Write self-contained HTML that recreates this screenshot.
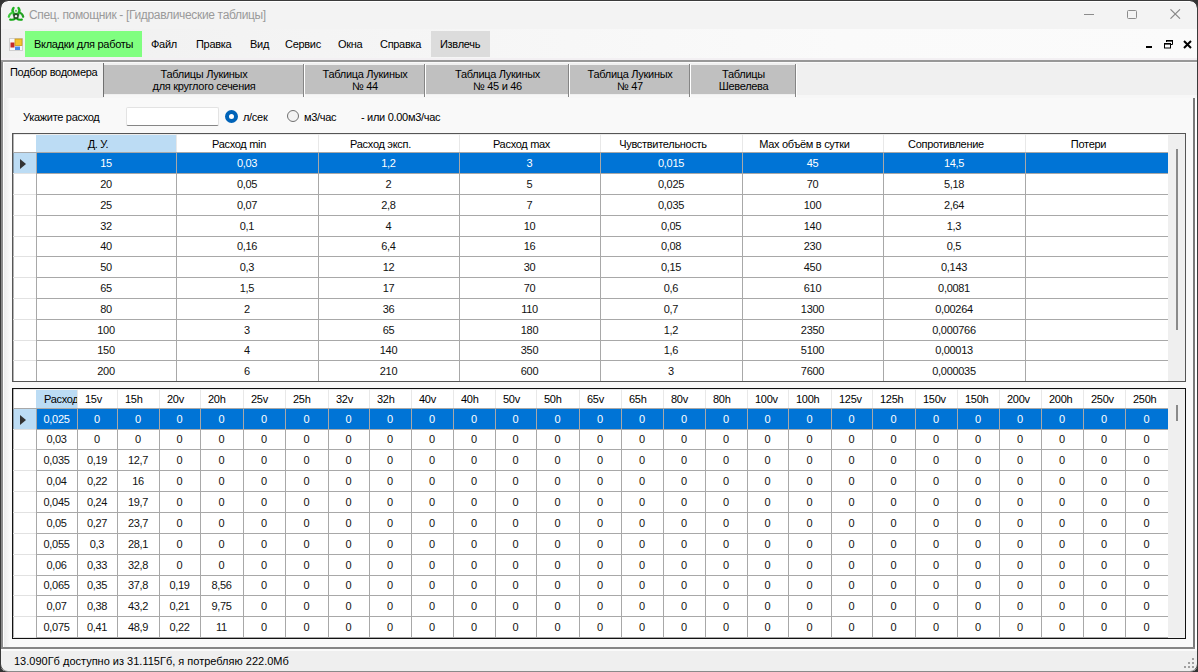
<!DOCTYPE html>
<html><head><meta charset="utf-8"><style>
*{margin:0;padding:0;box-sizing:border-box}
html,body{width:1198px;height:672px;overflow:hidden;background:#333;font-family:"Liberation Sans", sans-serif;}
.ab{position:absolute}
.t11{position:absolute;font-size:11px;letter-spacing:-0.3px;white-space:nowrap;color:#000;line-height:13px}
.ht{position:absolute;font-size:11px;letter-spacing:-0.3px;text-align:center;white-space:nowrap;overflow:hidden;color:#000}
.ct{position:absolute;font-size:11px;letter-spacing:-0.3px;text-align:center;white-space:nowrap;overflow:hidden;color:#111}
.ct.s{color:#fff}
.tri{position:absolute;width:0;height:0;border-top:5px solid transparent;border-bottom:5px solid transparent;border-left:6px solid #333}
</style></head><body>
<div class="ab" style="left:0;top:0;width:1198px;height:672px;border-radius:8px;overflow:hidden">
<div class="ab" style="left:0;top:0;width:1198px;height:672px;background:#f3f3f3;border:1px solid #454545;border-radius:8px;overflow:hidden">
</div>
<div class="ab" style="left:8px;top:1px;width:1182px;height:1px;background:#fff"></div>
<svg class="ab" style="left:7px;top:6px" width="18" height="16" viewBox="0 0 18 16">
<g fill="none" stroke-linecap="round">
<path d="M6.5 2 Q4.5 4.5 6.5 6.8" stroke="#22b422" stroke-width="2.4"/>
<path d="M11.5 2 Q13.5 4.5 11.5 6.8" stroke="#22b422" stroke-width="2.4"/>
<path d="M1.8 10.8 Q2.6 7.6 5.2 6.8" stroke="#3cc83c" stroke-width="2.2"/>
<path d="M16.2 10.8 Q15.4 7.6 12.8 6.8" stroke="#22a022" stroke-width="2.2"/>
<path d="M3.2 13.6 Q6.5 14.2 8.2 12.4" stroke="#12a812" stroke-width="2.2"/>
<path d="M14.8 13.6 Q11.5 14.2 9.8 12.4" stroke="#12a812" stroke-width="2.2"/>
<path d="M6.5 8.8 Q9 6.6 11.5 8.8" stroke="#1c8c1c" stroke-width="1.8"/>
</g>
<circle cx="9" cy="10.2" r="2" fill="none" stroke="#2c4a2c" stroke-width="1.5"/>
<circle cx="9" cy="4.8" r="1.1" fill="#7aa87a"/>
</svg>
<div class="ab" style="left:29px;top:8px;font-size:12px;letter-spacing:-0.33px;color:#9a9a9a;white-space:nowrap">Спец. помощник - [Гидравлические таблицы]</div>
<!-- window controls -->
<div class="ab" style="left:1084px;top:14px;width:10px;height:1px;background:#8c8c8c"></div>
<div class="ab" style="left:1127px;top:10px;width:10px;height:9px;border:1px solid #8c8c8c;border-radius:1.5px"></div>
<svg class="ab" style="left:1170px;top:9px" width="11" height="10" viewBox="0 0 11 10"><path d="M0.5 0.3 L10 9.7 M10 0.3 L0.5 9.7" stroke="#888" stroke-width="1.1"/></svg>
<!-- menubar -->
<div class="ab" style="left:1px;top:29px;width:1196px;height:31px;background:linear-gradient(90deg,#f0f0f0 0%,#f6f6f6 40%,#fafafa 70%,#fbfbfb 100%)"></div>
<svg class="ab" style="left:9px;top:38px" width="14" height="13" viewBox="0 0 14 13">
<rect x="0.5" y="0.5" width="13" height="12" fill="#f8f8f8" stroke="#cfcfcf"/>
<rect x="1.5" y="4.5" width="4" height="5" fill="#c42a2a"/>
<rect x="6" y="1" width="7" height="6.5" fill="#f4c430" stroke="#c8981a" stroke-width="0.8"/>
<rect x="6" y="8.5" width="5" height="3.5" fill="#4a8ae8"/>
</svg>
<div class="ab" style="left:25px;top:31px;width:117px;height:26px;background:#80ff80"></div>
<div class="ab" style="left:431px;top:31px;width:59px;height:26px;background:#dcdcdc"></div>
<div class="t11" style="left:34px;top:38px">Вкладки для работы</div>
<div class="t11" style="left:151px;top:38px">Файл</div>
<div class="t11" style="left:196px;top:38px">Правка</div>
<div class="t11" style="left:250px;top:38px">Вид</div>
<div class="t11" style="left:285px;top:38px">Сервис</div>
<div class="t11" style="left:338px;top:38px">Окна</div>
<div class="t11" style="left:380px;top:38px">Справка</div>
<div class="t11" style="left:440px;top:38px">Извлечь</div>
<div class="ab" style="left:1146px;top:46px;width:6px;height:2px;background:#000"></div>
<svg class="ab" style="left:1163px;top:39px" width="11" height="10" viewBox="0 0 11 10">
<path d="M3.5 3 V1.5 H9.5 V5.5 H8" fill="none" stroke="#000" stroke-width="1"/><rect x="3" y="1" width="7" height="1.6" fill="#000"/>
<rect x="1.5" y="4.5" width="6" height="4.5" fill="#fff" stroke="#000" stroke-width="1"/><rect x="1" y="4" width="7" height="1.6" fill="#000"/>
</svg>
<svg class="ab" style="left:1183px;top:40px" width="9" height="9" viewBox="0 0 9 9"><path d="M1 1 L8 8 M8 1 L1 8" stroke="#000" stroke-width="2"/></svg>
<!-- separator -->
<div class="ab" style="left:1px;top:58px;width:1196px;height:2px;background:#f3f0f3"></div>
<div class="ab" style="left:1px;top:60px;width:1196px;height:2px;background:#989898"></div>
<div class="ab" style="left:1px;top:62px;width:1196px;height:36px;background:#f0f0f0"></div>
<div class="ab" style="left:1px;top:62px;width:1196px;height:1px;background:#fafafa"></div>
<div class="ab" style="left:1px;top:95px;width:1196px;height:3px;background:#f7f7f7"></div>
<!-- tabs -->
<div class="ab" style="left:3px;top:62px;width:101px;height:36px;background:#f0f0f0;border-top:1px solid #fafafa;border-left:1px solid #fff"></div>
<div class="ab" style="left:103px;top:63px;width:1px;height:34px;background:#707070"></div>
<div class="t11" style="left:10px;top:66px">Подбор водомера</div>
<div class="ab" style="left:104px;top:65px;width:200px;height:29px;background:#c0c0c0"></div>
<div class="ab" style="left:303px;top:64px;width:1px;height:33px;background:#858585"></div>
<div class="ab" style="left:304px;top:64px;width:1px;height:33px;background:#fff"></div>
<div class="t11" style="left:104px;top:68px;width:200px;text-align:center;line-height:12px">Таблицы Лукиных<br>для круглого сечения</div>
<div class="ab" style="left:305px;top:65px;width:120px;height:29px;background:#c0c0c0"></div>
<div class="ab" style="left:424px;top:64px;width:1px;height:33px;background:#858585"></div>
<div class="ab" style="left:425px;top:64px;width:1px;height:33px;background:#fff"></div>
<div class="t11" style="left:305px;top:68px;width:120px;text-align:center;line-height:12px">Таблица Лукиных<br>№ 44</div>
<div class="ab" style="left:426px;top:65px;width:143px;height:29px;background:#c0c0c0"></div>
<div class="ab" style="left:568px;top:64px;width:1px;height:33px;background:#858585"></div>
<div class="ab" style="left:569px;top:64px;width:1px;height:33px;background:#fff"></div>
<div class="t11" style="left:426px;top:68px;width:143px;text-align:center;line-height:12px">Таблица Лукиных<br>№ 45 и 46</div>
<div class="ab" style="left:570px;top:65px;width:120px;height:29px;background:#c0c0c0"></div>
<div class="ab" style="left:689px;top:64px;width:1px;height:33px;background:#858585"></div>
<div class="ab" style="left:690px;top:64px;width:1px;height:33px;background:#fff"></div>
<div class="t11" style="left:570px;top:68px;width:120px;text-align:center;line-height:12px">Таблица Лукиных<br>№ 47</div>
<div class="ab" style="left:691px;top:65px;width:105px;height:29px;background:#c0c0c0"></div>
<div class="ab" style="left:795px;top:64px;width:1px;height:33px;background:#858585"></div>
<div class="ab" style="left:796px;top:64px;width:1px;height:33px;background:#fff"></div>
<div class="t11" style="left:691px;top:68px;width:105px;text-align:center;line-height:12px">Таблицы<br>Шевелева</div>

<!-- page -->
<div class="ab" style="left:1px;top:98px;width:1196px;height:549px;background:#f9f9f9"></div>
<div class="ab" style="left:1px;top:62px;width:2px;height:585px;background:#8c8c8c"></div>
<div class="ab" style="left:3px;top:98px;width:1px;height:549px;background:#fff"></div>
<div class="ab" style="left:4px;top:98px;width:6px;height:549px;background:linear-gradient(90deg,#ececec,#f9f9f9)"></div>
<div class="ab" style="left:1193px;top:98px;width:2px;height:549px;background:#7a7a7a"></div>
<div class="ab" style="left:1195px;top:98px;width:2px;height:551px;background:#fff"></div>
<div class="ab" style="left:1px;top:647px;width:1194px;height:2px;background:#858585"></div>
<div class="ab" style="left:1px;top:649px;width:1196px;height:2px;background:#fafafa"></div>
<div class="t11" style="left:23px;top:111px">Укажите расход</div>
<div class="ab" style="left:126px;top:107px;width:93px;height:19px;background:#fff;border:1px solid #e3e3e3;border-bottom:1px solid #868686;border-radius:2px"></div>
<div class="ab" style="left:225px;top:110px;width:13px;height:13px;border-radius:50%;border:4px solid #0063b8;background:#fff"></div>
<div class="t11" style="left:243px;top:111px">л/сек</div>
<div class="ab" style="left:287px;top:110px;width:12px;height:12px;border-radius:50%;border:1px solid #707070;background:#f3f3f3"></div>
<div class="t11" style="left:304px;top:111px">м3/час</div>
<div class="t11" style="left:361px;top:111px">- или 0.00м3/час</div>
<div class="ab" style="left:12px;top:133px;width:1174px;height:249px;border:1px solid #555;background:#fff"></div>
<div class="ab" style="left:36px;top:134px;width:140px;height:18px;background:#bcdcf4"></div>
<div class="ab" style="left:13px;top:134px;width:1155px;height:1px;background:#ececec"></div>
<div class="ab" style="left:13px;top:153px;width:23px;height:20px;background:#bcdcf4"></div>
<div class="ab" style="left:37px;top:153px;width:1131px;height:20px;background:#0074d6"></div>
<div class="tri" style="left:20px;top:159px"></div>
<div class="ab" style="left:13px;top:134px;width:1px;height:247px;background:rgba(0,0,0,0.3)"></div>
<div class="ab" style="left:13px;top:152px;width:23px;height:1px;background:#a8a8a8"></div>
<div class="ab" style="left:36px;top:152px;width:1132px;height:1px;background:#a8a8a8"></div>
<div class="ab" style="left:13px;top:173px;width:23px;height:1px;background:#e2e2e2"></div>
<div class="ab" style="left:36px;top:173px;width:1132px;height:1px;background:#a8a8a8"></div>
<div class="ab" style="left:13px;top:194px;width:23px;height:1px;background:#e2e2e2"></div>
<div class="ab" style="left:36px;top:194px;width:1132px;height:1px;background:#a8a8a8"></div>
<div class="ab" style="left:13px;top:215px;width:23px;height:1px;background:#e2e2e2"></div>
<div class="ab" style="left:36px;top:215px;width:1132px;height:1px;background:#a8a8a8"></div>
<div class="ab" style="left:13px;top:236px;width:23px;height:1px;background:#e2e2e2"></div>
<div class="ab" style="left:36px;top:236px;width:1132px;height:1px;background:#a8a8a8"></div>
<div class="ab" style="left:13px;top:256px;width:23px;height:1px;background:#e2e2e2"></div>
<div class="ab" style="left:36px;top:256px;width:1132px;height:1px;background:#a8a8a8"></div>
<div class="ab" style="left:13px;top:277px;width:23px;height:1px;background:#e2e2e2"></div>
<div class="ab" style="left:36px;top:277px;width:1132px;height:1px;background:#a8a8a8"></div>
<div class="ab" style="left:13px;top:298px;width:23px;height:1px;background:#e2e2e2"></div>
<div class="ab" style="left:36px;top:298px;width:1132px;height:1px;background:#a8a8a8"></div>
<div class="ab" style="left:13px;top:319px;width:23px;height:1px;background:#e2e2e2"></div>
<div class="ab" style="left:36px;top:319px;width:1132px;height:1px;background:#a8a8a8"></div>
<div class="ab" style="left:13px;top:340px;width:23px;height:1px;background:#e2e2e2"></div>
<div class="ab" style="left:36px;top:340px;width:1132px;height:1px;background:#a8a8a8"></div>
<div class="ab" style="left:13px;top:360px;width:23px;height:1px;background:#e2e2e2"></div>
<div class="ab" style="left:36px;top:360px;width:1132px;height:1px;background:#a8a8a8"></div>
<div class="ab" style="left:36px;top:152px;width:1px;height:229px;background:#a8a8a8"></div>
<div class="ab" style="left:176px;top:134px;width:1px;height:18px;background:#e8e8e8"></div>
<div class="ab" style="left:176px;top:152px;width:1px;height:229px;background:#a8a8a8"></div>
<div class="ab" style="left:318px;top:134px;width:1px;height:18px;background:#e8e8e8"></div>
<div class="ab" style="left:318px;top:152px;width:1px;height:229px;background:#a8a8a8"></div>
<div class="ab" style="left:459px;top:134px;width:1px;height:18px;background:#e8e8e8"></div>
<div class="ab" style="left:459px;top:152px;width:1px;height:229px;background:#a8a8a8"></div>
<div class="ab" style="left:600px;top:134px;width:1px;height:18px;background:#e8e8e8"></div>
<div class="ab" style="left:600px;top:152px;width:1px;height:229px;background:#a8a8a8"></div>
<div class="ab" style="left:742px;top:134px;width:1px;height:18px;background:#e8e8e8"></div>
<div class="ab" style="left:742px;top:152px;width:1px;height:229px;background:#a8a8a8"></div>
<div class="ab" style="left:883px;top:134px;width:1px;height:18px;background:#e8e8e8"></div>
<div class="ab" style="left:883px;top:152px;width:1px;height:229px;background:#a8a8a8"></div>
<div class="ab" style="left:1025px;top:134px;width:1px;height:18px;background:#e8e8e8"></div>
<div class="ab" style="left:1025px;top:152px;width:1px;height:229px;background:#a8a8a8"></div>
<div class="ht" style="left:36px;width:140px;padding-right:16px;text-align:center;top:135px;height:17px;line-height:18px">Д. У.</div>
<div class="ht" style="left:176px;width:142px;padding-right:16px;text-align:center;top:135px;height:17px;line-height:18px">Расход min</div>
<div class="ht" style="left:318px;width:141px;padding-right:16px;text-align:center;top:135px;height:17px;line-height:18px">Расход эксп.</div>
<div class="ht" style="left:459px;width:141px;padding-right:16px;text-align:center;top:135px;height:17px;line-height:18px">Расход max</div>
<div class="ht" style="left:600px;width:142px;padding-right:16px;text-align:center;top:135px;height:17px;line-height:18px">Чувствительность</div>
<div class="ht" style="left:742px;width:141px;padding-right:16px;text-align:center;top:135px;height:17px;line-height:18px">Max объём в сутки</div>
<div class="ht" style="left:883px;width:142px;padding-right:16px;text-align:center;top:135px;height:17px;line-height:18px">Сопротивление</div>
<div class="ht" style="left:1025px;width:143px;padding-right:16px;text-align:center;top:135px;height:17px;line-height:18px">Потери</div>
<div class="ct s" style="left:36px;top:152px;width:140px;height:21px;line-height:22px">15</div>
<div class="ct s" style="left:176px;top:152px;width:142px;height:21px;line-height:22px">0,03</div>
<div class="ct s" style="left:318px;top:152px;width:141px;height:21px;line-height:22px">1,2</div>
<div class="ct s" style="left:459px;top:152px;width:141px;height:21px;line-height:22px">3</div>
<div class="ct s" style="left:600px;top:152px;width:142px;height:21px;line-height:22px">0,015</div>
<div class="ct s" style="left:742px;top:152px;width:141px;height:21px;line-height:22px">45</div>
<div class="ct s" style="left:883px;top:152px;width:142px;height:21px;line-height:22px">14,5</div>
<div class="ct" style="left:36px;top:173px;width:140px;height:21px;line-height:22px">20</div>
<div class="ct" style="left:176px;top:173px;width:142px;height:21px;line-height:22px">0,05</div>
<div class="ct" style="left:318px;top:173px;width:141px;height:21px;line-height:22px">2</div>
<div class="ct" style="left:459px;top:173px;width:141px;height:21px;line-height:22px">5</div>
<div class="ct" style="left:600px;top:173px;width:142px;height:21px;line-height:22px">0,025</div>
<div class="ct" style="left:742px;top:173px;width:141px;height:21px;line-height:22px">70</div>
<div class="ct" style="left:883px;top:173px;width:142px;height:21px;line-height:22px">5,18</div>
<div class="ct" style="left:36px;top:194px;width:140px;height:21px;line-height:22px">25</div>
<div class="ct" style="left:176px;top:194px;width:142px;height:21px;line-height:22px">0,07</div>
<div class="ct" style="left:318px;top:194px;width:141px;height:21px;line-height:22px">2,8</div>
<div class="ct" style="left:459px;top:194px;width:141px;height:21px;line-height:22px">7</div>
<div class="ct" style="left:600px;top:194px;width:142px;height:21px;line-height:22px">0,035</div>
<div class="ct" style="left:742px;top:194px;width:141px;height:21px;line-height:22px">100</div>
<div class="ct" style="left:883px;top:194px;width:142px;height:21px;line-height:22px">2,64</div>
<div class="ct" style="left:36px;top:215px;width:140px;height:21px;line-height:22px">32</div>
<div class="ct" style="left:176px;top:215px;width:142px;height:21px;line-height:22px">0,1</div>
<div class="ct" style="left:318px;top:215px;width:141px;height:21px;line-height:22px">4</div>
<div class="ct" style="left:459px;top:215px;width:141px;height:21px;line-height:22px">10</div>
<div class="ct" style="left:600px;top:215px;width:142px;height:21px;line-height:22px">0,05</div>
<div class="ct" style="left:742px;top:215px;width:141px;height:21px;line-height:22px">140</div>
<div class="ct" style="left:883px;top:215px;width:142px;height:21px;line-height:22px">1,3</div>
<div class="ct" style="left:36px;top:236px;width:140px;height:20px;line-height:21px">40</div>
<div class="ct" style="left:176px;top:236px;width:142px;height:20px;line-height:21px">0,16</div>
<div class="ct" style="left:318px;top:236px;width:141px;height:20px;line-height:21px">6,4</div>
<div class="ct" style="left:459px;top:236px;width:141px;height:20px;line-height:21px">16</div>
<div class="ct" style="left:600px;top:236px;width:142px;height:20px;line-height:21px">0,08</div>
<div class="ct" style="left:742px;top:236px;width:141px;height:20px;line-height:21px">230</div>
<div class="ct" style="left:883px;top:236px;width:142px;height:20px;line-height:21px">0,5</div>
<div class="ct" style="left:36px;top:256px;width:140px;height:21px;line-height:22px">50</div>
<div class="ct" style="left:176px;top:256px;width:142px;height:21px;line-height:22px">0,3</div>
<div class="ct" style="left:318px;top:256px;width:141px;height:21px;line-height:22px">12</div>
<div class="ct" style="left:459px;top:256px;width:141px;height:21px;line-height:22px">30</div>
<div class="ct" style="left:600px;top:256px;width:142px;height:21px;line-height:22px">0,15</div>
<div class="ct" style="left:742px;top:256px;width:141px;height:21px;line-height:22px">450</div>
<div class="ct" style="left:883px;top:256px;width:142px;height:21px;line-height:22px">0,143</div>
<div class="ct" style="left:36px;top:277px;width:140px;height:21px;line-height:22px">65</div>
<div class="ct" style="left:176px;top:277px;width:142px;height:21px;line-height:22px">1,5</div>
<div class="ct" style="left:318px;top:277px;width:141px;height:21px;line-height:22px">17</div>
<div class="ct" style="left:459px;top:277px;width:141px;height:21px;line-height:22px">70</div>
<div class="ct" style="left:600px;top:277px;width:142px;height:21px;line-height:22px">0,6</div>
<div class="ct" style="left:742px;top:277px;width:141px;height:21px;line-height:22px">610</div>
<div class="ct" style="left:883px;top:277px;width:142px;height:21px;line-height:22px">0,0081</div>
<div class="ct" style="left:36px;top:298px;width:140px;height:21px;line-height:22px">80</div>
<div class="ct" style="left:176px;top:298px;width:142px;height:21px;line-height:22px">2</div>
<div class="ct" style="left:318px;top:298px;width:141px;height:21px;line-height:22px">36</div>
<div class="ct" style="left:459px;top:298px;width:141px;height:21px;line-height:22px">110</div>
<div class="ct" style="left:600px;top:298px;width:142px;height:21px;line-height:22px">0,7</div>
<div class="ct" style="left:742px;top:298px;width:141px;height:21px;line-height:22px">1300</div>
<div class="ct" style="left:883px;top:298px;width:142px;height:21px;line-height:22px">0,00264</div>
<div class="ct" style="left:36px;top:319px;width:140px;height:21px;line-height:22px">100</div>
<div class="ct" style="left:176px;top:319px;width:142px;height:21px;line-height:22px">3</div>
<div class="ct" style="left:318px;top:319px;width:141px;height:21px;line-height:22px">65</div>
<div class="ct" style="left:459px;top:319px;width:141px;height:21px;line-height:22px">180</div>
<div class="ct" style="left:600px;top:319px;width:142px;height:21px;line-height:22px">1,2</div>
<div class="ct" style="left:742px;top:319px;width:141px;height:21px;line-height:22px">2350</div>
<div class="ct" style="left:883px;top:319px;width:142px;height:21px;line-height:22px">0,000766</div>
<div class="ct" style="left:36px;top:340px;width:140px;height:20px;line-height:21px">150</div>
<div class="ct" style="left:176px;top:340px;width:142px;height:20px;line-height:21px">4</div>
<div class="ct" style="left:318px;top:340px;width:141px;height:20px;line-height:21px">140</div>
<div class="ct" style="left:459px;top:340px;width:141px;height:20px;line-height:21px">350</div>
<div class="ct" style="left:600px;top:340px;width:142px;height:20px;line-height:21px">1,6</div>
<div class="ct" style="left:742px;top:340px;width:141px;height:20px;line-height:21px">5100</div>
<div class="ct" style="left:883px;top:340px;width:142px;height:20px;line-height:21px">0,00013</div>
<div class="ct" style="left:36px;top:360px;width:140px;height:21px;line-height:22px">200</div>
<div class="ct" style="left:176px;top:360px;width:142px;height:21px;line-height:22px">6</div>
<div class="ct" style="left:318px;top:360px;width:141px;height:21px;line-height:22px">210</div>
<div class="ct" style="left:459px;top:360px;width:141px;height:21px;line-height:22px">600</div>
<div class="ct" style="left:600px;top:360px;width:142px;height:21px;line-height:22px">3</div>
<div class="ct" style="left:742px;top:360px;width:141px;height:21px;line-height:22px">7600</div>
<div class="ct" style="left:883px;top:360px;width:142px;height:21px;line-height:22px">0,000035</div>
<div class="ab" style="left:1168px;top:134px;width:17px;height:247px;background:#efefef"></div>
<div class="ab" style="left:1176px;top:149px;width:2px;height:181px;background:#8a8a8a"></div>
<div class="ab" style="left:12px;top:388px;width:1174px;height:251px;border:1px solid #111;background:#fff"></div>
<div class="ab" style="left:36px;top:389px;width:41px;height:19px;background:#bcdcf4"></div>
<div class="ab" style="left:13px;top:389px;width:1155px;height:1px;background:#ececec"></div>
<div class="ab" style="left:13px;top:409px;width:23px;height:20px;background:#bcdcf4"></div>
<div class="ab" style="left:37px;top:409px;width:1131px;height:20px;background:#0074d6"></div>
<div class="tri" style="left:20px;top:415px"></div>
<div class="ab" style="left:13px;top:389px;width:1px;height:249px;background:rgba(0,0,0,0.3)"></div>
<div class="ab" style="left:13px;top:408px;width:23px;height:1px;background:#a8a8a8"></div>
<div class="ab" style="left:36px;top:408px;width:1132px;height:1px;background:#a8a8a8"></div>
<div class="ab" style="left:13px;top:429px;width:23px;height:1px;background:#e2e2e2"></div>
<div class="ab" style="left:36px;top:429px;width:1132px;height:1px;background:#a8a8a8"></div>
<div class="ab" style="left:13px;top:449px;width:23px;height:1px;background:#e2e2e2"></div>
<div class="ab" style="left:36px;top:449px;width:1132px;height:1px;background:#a8a8a8"></div>
<div class="ab" style="left:13px;top:470px;width:23px;height:1px;background:#e2e2e2"></div>
<div class="ab" style="left:36px;top:470px;width:1132px;height:1px;background:#a8a8a8"></div>
<div class="ab" style="left:13px;top:491px;width:23px;height:1px;background:#e2e2e2"></div>
<div class="ab" style="left:36px;top:491px;width:1132px;height:1px;background:#a8a8a8"></div>
<div class="ab" style="left:13px;top:512px;width:23px;height:1px;background:#e2e2e2"></div>
<div class="ab" style="left:36px;top:512px;width:1132px;height:1px;background:#a8a8a8"></div>
<div class="ab" style="left:13px;top:533px;width:23px;height:1px;background:#e2e2e2"></div>
<div class="ab" style="left:36px;top:533px;width:1132px;height:1px;background:#a8a8a8"></div>
<div class="ab" style="left:13px;top:554px;width:23px;height:1px;background:#e2e2e2"></div>
<div class="ab" style="left:36px;top:554px;width:1132px;height:1px;background:#a8a8a8"></div>
<div class="ab" style="left:13px;top:575px;width:23px;height:1px;background:#e2e2e2"></div>
<div class="ab" style="left:36px;top:575px;width:1132px;height:1px;background:#a8a8a8"></div>
<div class="ab" style="left:13px;top:595px;width:23px;height:1px;background:#e2e2e2"></div>
<div class="ab" style="left:36px;top:595px;width:1132px;height:1px;background:#a8a8a8"></div>
<div class="ab" style="left:13px;top:616px;width:23px;height:1px;background:#e2e2e2"></div>
<div class="ab" style="left:36px;top:616px;width:1132px;height:1px;background:#a8a8a8"></div>
<div class="ab" style="left:13px;top:637px;width:23px;height:1px;background:#e2e2e2"></div>
<div class="ab" style="left:36px;top:637px;width:1132px;height:1px;background:#a8a8a8"></div>
<div class="ab" style="left:36px;top:408px;width:1px;height:230px;background:#a8a8a8"></div>
<div class="ab" style="left:77px;top:389px;width:1px;height:19px;background:#e8e8e8"></div>
<div class="ab" style="left:77px;top:408px;width:1px;height:230px;background:#a8a8a8"></div>
<div class="ab" style="left:117px;top:389px;width:1px;height:19px;background:#e8e8e8"></div>
<div class="ab" style="left:117px;top:408px;width:1px;height:230px;background:#a8a8a8"></div>
<div class="ab" style="left:159px;top:389px;width:1px;height:19px;background:#e8e8e8"></div>
<div class="ab" style="left:159px;top:408px;width:1px;height:230px;background:#a8a8a8"></div>
<div class="ab" style="left:200px;top:389px;width:1px;height:19px;background:#e8e8e8"></div>
<div class="ab" style="left:200px;top:408px;width:1px;height:230px;background:#a8a8a8"></div>
<div class="ab" style="left:243px;top:389px;width:1px;height:19px;background:#e8e8e8"></div>
<div class="ab" style="left:243px;top:408px;width:1px;height:230px;background:#a8a8a8"></div>
<div class="ab" style="left:285px;top:389px;width:1px;height:19px;background:#e8e8e8"></div>
<div class="ab" style="left:285px;top:408px;width:1px;height:230px;background:#a8a8a8"></div>
<div class="ab" style="left:328px;top:389px;width:1px;height:19px;background:#e8e8e8"></div>
<div class="ab" style="left:328px;top:408px;width:1px;height:230px;background:#a8a8a8"></div>
<div class="ab" style="left:369px;top:389px;width:1px;height:19px;background:#e8e8e8"></div>
<div class="ab" style="left:369px;top:408px;width:1px;height:230px;background:#a8a8a8"></div>
<div class="ab" style="left:411px;top:389px;width:1px;height:19px;background:#e8e8e8"></div>
<div class="ab" style="left:411px;top:408px;width:1px;height:230px;background:#a8a8a8"></div>
<div class="ab" style="left:453px;top:389px;width:1px;height:19px;background:#e8e8e8"></div>
<div class="ab" style="left:453px;top:408px;width:1px;height:230px;background:#a8a8a8"></div>
<div class="ab" style="left:495px;top:389px;width:1px;height:19px;background:#e8e8e8"></div>
<div class="ab" style="left:495px;top:408px;width:1px;height:230px;background:#a8a8a8"></div>
<div class="ab" style="left:536px;top:389px;width:1px;height:19px;background:#e8e8e8"></div>
<div class="ab" style="left:536px;top:408px;width:1px;height:230px;background:#a8a8a8"></div>
<div class="ab" style="left:579px;top:389px;width:1px;height:19px;background:#e8e8e8"></div>
<div class="ab" style="left:579px;top:408px;width:1px;height:230px;background:#a8a8a8"></div>
<div class="ab" style="left:621px;top:389px;width:1px;height:19px;background:#e8e8e8"></div>
<div class="ab" style="left:621px;top:408px;width:1px;height:230px;background:#a8a8a8"></div>
<div class="ab" style="left:663px;top:389px;width:1px;height:19px;background:#e8e8e8"></div>
<div class="ab" style="left:663px;top:408px;width:1px;height:230px;background:#a8a8a8"></div>
<div class="ab" style="left:705px;top:389px;width:1px;height:19px;background:#e8e8e8"></div>
<div class="ab" style="left:705px;top:408px;width:1px;height:230px;background:#a8a8a8"></div>
<div class="ab" style="left:747px;top:389px;width:1px;height:19px;background:#e8e8e8"></div>
<div class="ab" style="left:747px;top:408px;width:1px;height:230px;background:#a8a8a8"></div>
<div class="ab" style="left:788px;top:389px;width:1px;height:19px;background:#e8e8e8"></div>
<div class="ab" style="left:788px;top:408px;width:1px;height:230px;background:#a8a8a8"></div>
<div class="ab" style="left:831px;top:389px;width:1px;height:19px;background:#e8e8e8"></div>
<div class="ab" style="left:831px;top:408px;width:1px;height:230px;background:#a8a8a8"></div>
<div class="ab" style="left:872px;top:389px;width:1px;height:19px;background:#e8e8e8"></div>
<div class="ab" style="left:872px;top:408px;width:1px;height:230px;background:#a8a8a8"></div>
<div class="ab" style="left:915px;top:389px;width:1px;height:19px;background:#e8e8e8"></div>
<div class="ab" style="left:915px;top:408px;width:1px;height:230px;background:#a8a8a8"></div>
<div class="ab" style="left:957px;top:389px;width:1px;height:19px;background:#e8e8e8"></div>
<div class="ab" style="left:957px;top:408px;width:1px;height:230px;background:#a8a8a8"></div>
<div class="ab" style="left:999px;top:389px;width:1px;height:19px;background:#e8e8e8"></div>
<div class="ab" style="left:999px;top:408px;width:1px;height:230px;background:#a8a8a8"></div>
<div class="ab" style="left:1041px;top:389px;width:1px;height:19px;background:#e8e8e8"></div>
<div class="ab" style="left:1041px;top:408px;width:1px;height:230px;background:#a8a8a8"></div>
<div class="ab" style="left:1083px;top:389px;width:1px;height:19px;background:#e8e8e8"></div>
<div class="ab" style="left:1083px;top:408px;width:1px;height:230px;background:#a8a8a8"></div>
<div class="ab" style="left:1125px;top:389px;width:1px;height:19px;background:#e8e8e8"></div>
<div class="ab" style="left:1125px;top:408px;width:1px;height:230px;background:#a8a8a8"></div>
<div class="ht" style="left:37px;width:40px;padding-left:7px;text-align:left;top:390px;height:18px;line-height:19px">Расход</div>
<div class="ht" style="left:78px;width:39px;padding-left:7px;text-align:left;top:390px;height:18px;line-height:19px">15v</div>
<div class="ht" style="left:118px;width:41px;padding-left:7px;text-align:left;top:390px;height:18px;line-height:19px">15h</div>
<div class="ht" style="left:160px;width:40px;padding-left:7px;text-align:left;top:390px;height:18px;line-height:19px">20v</div>
<div class="ht" style="left:201px;width:42px;padding-left:7px;text-align:left;top:390px;height:18px;line-height:19px">20h</div>
<div class="ht" style="left:244px;width:41px;padding-left:7px;text-align:left;top:390px;height:18px;line-height:19px">25v</div>
<div class="ht" style="left:286px;width:42px;padding-left:7px;text-align:left;top:390px;height:18px;line-height:19px">25h</div>
<div class="ht" style="left:329px;width:40px;padding-left:7px;text-align:left;top:390px;height:18px;line-height:19px">32v</div>
<div class="ht" style="left:370px;width:41px;padding-left:7px;text-align:left;top:390px;height:18px;line-height:19px">32h</div>
<div class="ht" style="left:412px;width:41px;padding-left:7px;text-align:left;top:390px;height:18px;line-height:19px">40v</div>
<div class="ht" style="left:454px;width:41px;padding-left:7px;text-align:left;top:390px;height:18px;line-height:19px">40h</div>
<div class="ht" style="left:496px;width:40px;padding-left:7px;text-align:left;top:390px;height:18px;line-height:19px">50v</div>
<div class="ht" style="left:537px;width:42px;padding-left:7px;text-align:left;top:390px;height:18px;line-height:19px">50h</div>
<div class="ht" style="left:580px;width:41px;padding-left:7px;text-align:left;top:390px;height:18px;line-height:19px">65v</div>
<div class="ht" style="left:622px;width:41px;padding-left:7px;text-align:left;top:390px;height:18px;line-height:19px">65h</div>
<div class="ht" style="left:664px;width:41px;padding-left:7px;text-align:left;top:390px;height:18px;line-height:19px">80v</div>
<div class="ht" style="left:706px;width:41px;padding-left:7px;text-align:left;top:390px;height:18px;line-height:19px">80h</div>
<div class="ht" style="left:748px;width:40px;padding-left:7px;text-align:left;top:390px;height:18px;line-height:19px">100v</div>
<div class="ht" style="left:789px;width:42px;padding-left:7px;text-align:left;top:390px;height:18px;line-height:19px">100h</div>
<div class="ht" style="left:832px;width:40px;padding-left:7px;text-align:left;top:390px;height:18px;line-height:19px">125v</div>
<div class="ht" style="left:873px;width:42px;padding-left:7px;text-align:left;top:390px;height:18px;line-height:19px">125h</div>
<div class="ht" style="left:916px;width:41px;padding-left:7px;text-align:left;top:390px;height:18px;line-height:19px">150v</div>
<div class="ht" style="left:958px;width:41px;padding-left:7px;text-align:left;top:390px;height:18px;line-height:19px">150h</div>
<div class="ht" style="left:1000px;width:41px;padding-left:7px;text-align:left;top:390px;height:18px;line-height:19px">200v</div>
<div class="ht" style="left:1042px;width:41px;padding-left:7px;text-align:left;top:390px;height:18px;line-height:19px">200h</div>
<div class="ht" style="left:1084px;width:41px;padding-left:7px;text-align:left;top:390px;height:18px;line-height:19px">250v</div>
<div class="ht" style="left:1126px;width:42px;padding-left:7px;text-align:left;top:390px;height:18px;line-height:19px">250h</div>
<div class="ct s" style="left:36px;top:408px;width:41px;height:21px;line-height:22px">0,025</div>
<div class="ct s" style="left:77px;top:408px;width:40px;height:21px;line-height:22px">0</div>
<div class="ct s" style="left:117px;top:408px;width:42px;height:21px;line-height:22px">0</div>
<div class="ct s" style="left:159px;top:408px;width:41px;height:21px;line-height:22px">0</div>
<div class="ct s" style="left:200px;top:408px;width:43px;height:21px;line-height:22px">0</div>
<div class="ct s" style="left:243px;top:408px;width:42px;height:21px;line-height:22px">0</div>
<div class="ct s" style="left:285px;top:408px;width:43px;height:21px;line-height:22px">0</div>
<div class="ct s" style="left:328px;top:408px;width:41px;height:21px;line-height:22px">0</div>
<div class="ct s" style="left:369px;top:408px;width:42px;height:21px;line-height:22px">0</div>
<div class="ct s" style="left:411px;top:408px;width:42px;height:21px;line-height:22px">0</div>
<div class="ct s" style="left:453px;top:408px;width:42px;height:21px;line-height:22px">0</div>
<div class="ct s" style="left:495px;top:408px;width:41px;height:21px;line-height:22px">0</div>
<div class="ct s" style="left:536px;top:408px;width:43px;height:21px;line-height:22px">0</div>
<div class="ct s" style="left:579px;top:408px;width:42px;height:21px;line-height:22px">0</div>
<div class="ct s" style="left:621px;top:408px;width:42px;height:21px;line-height:22px">0</div>
<div class="ct s" style="left:663px;top:408px;width:42px;height:21px;line-height:22px">0</div>
<div class="ct s" style="left:705px;top:408px;width:42px;height:21px;line-height:22px">0</div>
<div class="ct s" style="left:747px;top:408px;width:41px;height:21px;line-height:22px">0</div>
<div class="ct s" style="left:788px;top:408px;width:43px;height:21px;line-height:22px">0</div>
<div class="ct s" style="left:831px;top:408px;width:41px;height:21px;line-height:22px">0</div>
<div class="ct s" style="left:872px;top:408px;width:43px;height:21px;line-height:22px">0</div>
<div class="ct s" style="left:915px;top:408px;width:42px;height:21px;line-height:22px">0</div>
<div class="ct s" style="left:957px;top:408px;width:42px;height:21px;line-height:22px">0</div>
<div class="ct s" style="left:999px;top:408px;width:42px;height:21px;line-height:22px">0</div>
<div class="ct s" style="left:1041px;top:408px;width:42px;height:21px;line-height:22px">0</div>
<div class="ct s" style="left:1083px;top:408px;width:42px;height:21px;line-height:22px">0</div>
<div class="ct s" style="left:1125px;top:408px;width:43px;height:21px;line-height:22px">0</div>
<div class="ct" style="left:36px;top:429px;width:41px;height:20px;line-height:21px">0,03</div>
<div class="ct" style="left:77px;top:429px;width:40px;height:20px;line-height:21px">0</div>
<div class="ct" style="left:117px;top:429px;width:42px;height:20px;line-height:21px">0</div>
<div class="ct" style="left:159px;top:429px;width:41px;height:20px;line-height:21px">0</div>
<div class="ct" style="left:200px;top:429px;width:43px;height:20px;line-height:21px">0</div>
<div class="ct" style="left:243px;top:429px;width:42px;height:20px;line-height:21px">0</div>
<div class="ct" style="left:285px;top:429px;width:43px;height:20px;line-height:21px">0</div>
<div class="ct" style="left:328px;top:429px;width:41px;height:20px;line-height:21px">0</div>
<div class="ct" style="left:369px;top:429px;width:42px;height:20px;line-height:21px">0</div>
<div class="ct" style="left:411px;top:429px;width:42px;height:20px;line-height:21px">0</div>
<div class="ct" style="left:453px;top:429px;width:42px;height:20px;line-height:21px">0</div>
<div class="ct" style="left:495px;top:429px;width:41px;height:20px;line-height:21px">0</div>
<div class="ct" style="left:536px;top:429px;width:43px;height:20px;line-height:21px">0</div>
<div class="ct" style="left:579px;top:429px;width:42px;height:20px;line-height:21px">0</div>
<div class="ct" style="left:621px;top:429px;width:42px;height:20px;line-height:21px">0</div>
<div class="ct" style="left:663px;top:429px;width:42px;height:20px;line-height:21px">0</div>
<div class="ct" style="left:705px;top:429px;width:42px;height:20px;line-height:21px">0</div>
<div class="ct" style="left:747px;top:429px;width:41px;height:20px;line-height:21px">0</div>
<div class="ct" style="left:788px;top:429px;width:43px;height:20px;line-height:21px">0</div>
<div class="ct" style="left:831px;top:429px;width:41px;height:20px;line-height:21px">0</div>
<div class="ct" style="left:872px;top:429px;width:43px;height:20px;line-height:21px">0</div>
<div class="ct" style="left:915px;top:429px;width:42px;height:20px;line-height:21px">0</div>
<div class="ct" style="left:957px;top:429px;width:42px;height:20px;line-height:21px">0</div>
<div class="ct" style="left:999px;top:429px;width:42px;height:20px;line-height:21px">0</div>
<div class="ct" style="left:1041px;top:429px;width:42px;height:20px;line-height:21px">0</div>
<div class="ct" style="left:1083px;top:429px;width:42px;height:20px;line-height:21px">0</div>
<div class="ct" style="left:1125px;top:429px;width:43px;height:20px;line-height:21px">0</div>
<div class="ct" style="left:36px;top:449px;width:41px;height:21px;line-height:22px">0,035</div>
<div class="ct" style="left:77px;top:449px;width:40px;height:21px;line-height:22px">0,19</div>
<div class="ct" style="left:117px;top:449px;width:42px;height:21px;line-height:22px">12,7</div>
<div class="ct" style="left:159px;top:449px;width:41px;height:21px;line-height:22px">0</div>
<div class="ct" style="left:200px;top:449px;width:43px;height:21px;line-height:22px">0</div>
<div class="ct" style="left:243px;top:449px;width:42px;height:21px;line-height:22px">0</div>
<div class="ct" style="left:285px;top:449px;width:43px;height:21px;line-height:22px">0</div>
<div class="ct" style="left:328px;top:449px;width:41px;height:21px;line-height:22px">0</div>
<div class="ct" style="left:369px;top:449px;width:42px;height:21px;line-height:22px">0</div>
<div class="ct" style="left:411px;top:449px;width:42px;height:21px;line-height:22px">0</div>
<div class="ct" style="left:453px;top:449px;width:42px;height:21px;line-height:22px">0</div>
<div class="ct" style="left:495px;top:449px;width:41px;height:21px;line-height:22px">0</div>
<div class="ct" style="left:536px;top:449px;width:43px;height:21px;line-height:22px">0</div>
<div class="ct" style="left:579px;top:449px;width:42px;height:21px;line-height:22px">0</div>
<div class="ct" style="left:621px;top:449px;width:42px;height:21px;line-height:22px">0</div>
<div class="ct" style="left:663px;top:449px;width:42px;height:21px;line-height:22px">0</div>
<div class="ct" style="left:705px;top:449px;width:42px;height:21px;line-height:22px">0</div>
<div class="ct" style="left:747px;top:449px;width:41px;height:21px;line-height:22px">0</div>
<div class="ct" style="left:788px;top:449px;width:43px;height:21px;line-height:22px">0</div>
<div class="ct" style="left:831px;top:449px;width:41px;height:21px;line-height:22px">0</div>
<div class="ct" style="left:872px;top:449px;width:43px;height:21px;line-height:22px">0</div>
<div class="ct" style="left:915px;top:449px;width:42px;height:21px;line-height:22px">0</div>
<div class="ct" style="left:957px;top:449px;width:42px;height:21px;line-height:22px">0</div>
<div class="ct" style="left:999px;top:449px;width:42px;height:21px;line-height:22px">0</div>
<div class="ct" style="left:1041px;top:449px;width:42px;height:21px;line-height:22px">0</div>
<div class="ct" style="left:1083px;top:449px;width:42px;height:21px;line-height:22px">0</div>
<div class="ct" style="left:1125px;top:449px;width:43px;height:21px;line-height:22px">0</div>
<div class="ct" style="left:36px;top:470px;width:41px;height:21px;line-height:22px">0,04</div>
<div class="ct" style="left:77px;top:470px;width:40px;height:21px;line-height:22px">0,22</div>
<div class="ct" style="left:117px;top:470px;width:42px;height:21px;line-height:22px">16</div>
<div class="ct" style="left:159px;top:470px;width:41px;height:21px;line-height:22px">0</div>
<div class="ct" style="left:200px;top:470px;width:43px;height:21px;line-height:22px">0</div>
<div class="ct" style="left:243px;top:470px;width:42px;height:21px;line-height:22px">0</div>
<div class="ct" style="left:285px;top:470px;width:43px;height:21px;line-height:22px">0</div>
<div class="ct" style="left:328px;top:470px;width:41px;height:21px;line-height:22px">0</div>
<div class="ct" style="left:369px;top:470px;width:42px;height:21px;line-height:22px">0</div>
<div class="ct" style="left:411px;top:470px;width:42px;height:21px;line-height:22px">0</div>
<div class="ct" style="left:453px;top:470px;width:42px;height:21px;line-height:22px">0</div>
<div class="ct" style="left:495px;top:470px;width:41px;height:21px;line-height:22px">0</div>
<div class="ct" style="left:536px;top:470px;width:43px;height:21px;line-height:22px">0</div>
<div class="ct" style="left:579px;top:470px;width:42px;height:21px;line-height:22px">0</div>
<div class="ct" style="left:621px;top:470px;width:42px;height:21px;line-height:22px">0</div>
<div class="ct" style="left:663px;top:470px;width:42px;height:21px;line-height:22px">0</div>
<div class="ct" style="left:705px;top:470px;width:42px;height:21px;line-height:22px">0</div>
<div class="ct" style="left:747px;top:470px;width:41px;height:21px;line-height:22px">0</div>
<div class="ct" style="left:788px;top:470px;width:43px;height:21px;line-height:22px">0</div>
<div class="ct" style="left:831px;top:470px;width:41px;height:21px;line-height:22px">0</div>
<div class="ct" style="left:872px;top:470px;width:43px;height:21px;line-height:22px">0</div>
<div class="ct" style="left:915px;top:470px;width:42px;height:21px;line-height:22px">0</div>
<div class="ct" style="left:957px;top:470px;width:42px;height:21px;line-height:22px">0</div>
<div class="ct" style="left:999px;top:470px;width:42px;height:21px;line-height:22px">0</div>
<div class="ct" style="left:1041px;top:470px;width:42px;height:21px;line-height:22px">0</div>
<div class="ct" style="left:1083px;top:470px;width:42px;height:21px;line-height:22px">0</div>
<div class="ct" style="left:1125px;top:470px;width:43px;height:21px;line-height:22px">0</div>
<div class="ct" style="left:36px;top:491px;width:41px;height:21px;line-height:22px">0,045</div>
<div class="ct" style="left:77px;top:491px;width:40px;height:21px;line-height:22px">0,24</div>
<div class="ct" style="left:117px;top:491px;width:42px;height:21px;line-height:22px">19,7</div>
<div class="ct" style="left:159px;top:491px;width:41px;height:21px;line-height:22px">0</div>
<div class="ct" style="left:200px;top:491px;width:43px;height:21px;line-height:22px">0</div>
<div class="ct" style="left:243px;top:491px;width:42px;height:21px;line-height:22px">0</div>
<div class="ct" style="left:285px;top:491px;width:43px;height:21px;line-height:22px">0</div>
<div class="ct" style="left:328px;top:491px;width:41px;height:21px;line-height:22px">0</div>
<div class="ct" style="left:369px;top:491px;width:42px;height:21px;line-height:22px">0</div>
<div class="ct" style="left:411px;top:491px;width:42px;height:21px;line-height:22px">0</div>
<div class="ct" style="left:453px;top:491px;width:42px;height:21px;line-height:22px">0</div>
<div class="ct" style="left:495px;top:491px;width:41px;height:21px;line-height:22px">0</div>
<div class="ct" style="left:536px;top:491px;width:43px;height:21px;line-height:22px">0</div>
<div class="ct" style="left:579px;top:491px;width:42px;height:21px;line-height:22px">0</div>
<div class="ct" style="left:621px;top:491px;width:42px;height:21px;line-height:22px">0</div>
<div class="ct" style="left:663px;top:491px;width:42px;height:21px;line-height:22px">0</div>
<div class="ct" style="left:705px;top:491px;width:42px;height:21px;line-height:22px">0</div>
<div class="ct" style="left:747px;top:491px;width:41px;height:21px;line-height:22px">0</div>
<div class="ct" style="left:788px;top:491px;width:43px;height:21px;line-height:22px">0</div>
<div class="ct" style="left:831px;top:491px;width:41px;height:21px;line-height:22px">0</div>
<div class="ct" style="left:872px;top:491px;width:43px;height:21px;line-height:22px">0</div>
<div class="ct" style="left:915px;top:491px;width:42px;height:21px;line-height:22px">0</div>
<div class="ct" style="left:957px;top:491px;width:42px;height:21px;line-height:22px">0</div>
<div class="ct" style="left:999px;top:491px;width:42px;height:21px;line-height:22px">0</div>
<div class="ct" style="left:1041px;top:491px;width:42px;height:21px;line-height:22px">0</div>
<div class="ct" style="left:1083px;top:491px;width:42px;height:21px;line-height:22px">0</div>
<div class="ct" style="left:1125px;top:491px;width:43px;height:21px;line-height:22px">0</div>
<div class="ct" style="left:36px;top:512px;width:41px;height:21px;line-height:22px">0,05</div>
<div class="ct" style="left:77px;top:512px;width:40px;height:21px;line-height:22px">0,27</div>
<div class="ct" style="left:117px;top:512px;width:42px;height:21px;line-height:22px">23,7</div>
<div class="ct" style="left:159px;top:512px;width:41px;height:21px;line-height:22px">0</div>
<div class="ct" style="left:200px;top:512px;width:43px;height:21px;line-height:22px">0</div>
<div class="ct" style="left:243px;top:512px;width:42px;height:21px;line-height:22px">0</div>
<div class="ct" style="left:285px;top:512px;width:43px;height:21px;line-height:22px">0</div>
<div class="ct" style="left:328px;top:512px;width:41px;height:21px;line-height:22px">0</div>
<div class="ct" style="left:369px;top:512px;width:42px;height:21px;line-height:22px">0</div>
<div class="ct" style="left:411px;top:512px;width:42px;height:21px;line-height:22px">0</div>
<div class="ct" style="left:453px;top:512px;width:42px;height:21px;line-height:22px">0</div>
<div class="ct" style="left:495px;top:512px;width:41px;height:21px;line-height:22px">0</div>
<div class="ct" style="left:536px;top:512px;width:43px;height:21px;line-height:22px">0</div>
<div class="ct" style="left:579px;top:512px;width:42px;height:21px;line-height:22px">0</div>
<div class="ct" style="left:621px;top:512px;width:42px;height:21px;line-height:22px">0</div>
<div class="ct" style="left:663px;top:512px;width:42px;height:21px;line-height:22px">0</div>
<div class="ct" style="left:705px;top:512px;width:42px;height:21px;line-height:22px">0</div>
<div class="ct" style="left:747px;top:512px;width:41px;height:21px;line-height:22px">0</div>
<div class="ct" style="left:788px;top:512px;width:43px;height:21px;line-height:22px">0</div>
<div class="ct" style="left:831px;top:512px;width:41px;height:21px;line-height:22px">0</div>
<div class="ct" style="left:872px;top:512px;width:43px;height:21px;line-height:22px">0</div>
<div class="ct" style="left:915px;top:512px;width:42px;height:21px;line-height:22px">0</div>
<div class="ct" style="left:957px;top:512px;width:42px;height:21px;line-height:22px">0</div>
<div class="ct" style="left:999px;top:512px;width:42px;height:21px;line-height:22px">0</div>
<div class="ct" style="left:1041px;top:512px;width:42px;height:21px;line-height:22px">0</div>
<div class="ct" style="left:1083px;top:512px;width:42px;height:21px;line-height:22px">0</div>
<div class="ct" style="left:1125px;top:512px;width:43px;height:21px;line-height:22px">0</div>
<div class="ct" style="left:36px;top:533px;width:41px;height:21px;line-height:22px">0,055</div>
<div class="ct" style="left:77px;top:533px;width:40px;height:21px;line-height:22px">0,3</div>
<div class="ct" style="left:117px;top:533px;width:42px;height:21px;line-height:22px">28,1</div>
<div class="ct" style="left:159px;top:533px;width:41px;height:21px;line-height:22px">0</div>
<div class="ct" style="left:200px;top:533px;width:43px;height:21px;line-height:22px">0</div>
<div class="ct" style="left:243px;top:533px;width:42px;height:21px;line-height:22px">0</div>
<div class="ct" style="left:285px;top:533px;width:43px;height:21px;line-height:22px">0</div>
<div class="ct" style="left:328px;top:533px;width:41px;height:21px;line-height:22px">0</div>
<div class="ct" style="left:369px;top:533px;width:42px;height:21px;line-height:22px">0</div>
<div class="ct" style="left:411px;top:533px;width:42px;height:21px;line-height:22px">0</div>
<div class="ct" style="left:453px;top:533px;width:42px;height:21px;line-height:22px">0</div>
<div class="ct" style="left:495px;top:533px;width:41px;height:21px;line-height:22px">0</div>
<div class="ct" style="left:536px;top:533px;width:43px;height:21px;line-height:22px">0</div>
<div class="ct" style="left:579px;top:533px;width:42px;height:21px;line-height:22px">0</div>
<div class="ct" style="left:621px;top:533px;width:42px;height:21px;line-height:22px">0</div>
<div class="ct" style="left:663px;top:533px;width:42px;height:21px;line-height:22px">0</div>
<div class="ct" style="left:705px;top:533px;width:42px;height:21px;line-height:22px">0</div>
<div class="ct" style="left:747px;top:533px;width:41px;height:21px;line-height:22px">0</div>
<div class="ct" style="left:788px;top:533px;width:43px;height:21px;line-height:22px">0</div>
<div class="ct" style="left:831px;top:533px;width:41px;height:21px;line-height:22px">0</div>
<div class="ct" style="left:872px;top:533px;width:43px;height:21px;line-height:22px">0</div>
<div class="ct" style="left:915px;top:533px;width:42px;height:21px;line-height:22px">0</div>
<div class="ct" style="left:957px;top:533px;width:42px;height:21px;line-height:22px">0</div>
<div class="ct" style="left:999px;top:533px;width:42px;height:21px;line-height:22px">0</div>
<div class="ct" style="left:1041px;top:533px;width:42px;height:21px;line-height:22px">0</div>
<div class="ct" style="left:1083px;top:533px;width:42px;height:21px;line-height:22px">0</div>
<div class="ct" style="left:1125px;top:533px;width:43px;height:21px;line-height:22px">0</div>
<div class="ct" style="left:36px;top:554px;width:41px;height:21px;line-height:22px">0,06</div>
<div class="ct" style="left:77px;top:554px;width:40px;height:21px;line-height:22px">0,33</div>
<div class="ct" style="left:117px;top:554px;width:42px;height:21px;line-height:22px">32,8</div>
<div class="ct" style="left:159px;top:554px;width:41px;height:21px;line-height:22px">0</div>
<div class="ct" style="left:200px;top:554px;width:43px;height:21px;line-height:22px">0</div>
<div class="ct" style="left:243px;top:554px;width:42px;height:21px;line-height:22px">0</div>
<div class="ct" style="left:285px;top:554px;width:43px;height:21px;line-height:22px">0</div>
<div class="ct" style="left:328px;top:554px;width:41px;height:21px;line-height:22px">0</div>
<div class="ct" style="left:369px;top:554px;width:42px;height:21px;line-height:22px">0</div>
<div class="ct" style="left:411px;top:554px;width:42px;height:21px;line-height:22px">0</div>
<div class="ct" style="left:453px;top:554px;width:42px;height:21px;line-height:22px">0</div>
<div class="ct" style="left:495px;top:554px;width:41px;height:21px;line-height:22px">0</div>
<div class="ct" style="left:536px;top:554px;width:43px;height:21px;line-height:22px">0</div>
<div class="ct" style="left:579px;top:554px;width:42px;height:21px;line-height:22px">0</div>
<div class="ct" style="left:621px;top:554px;width:42px;height:21px;line-height:22px">0</div>
<div class="ct" style="left:663px;top:554px;width:42px;height:21px;line-height:22px">0</div>
<div class="ct" style="left:705px;top:554px;width:42px;height:21px;line-height:22px">0</div>
<div class="ct" style="left:747px;top:554px;width:41px;height:21px;line-height:22px">0</div>
<div class="ct" style="left:788px;top:554px;width:43px;height:21px;line-height:22px">0</div>
<div class="ct" style="left:831px;top:554px;width:41px;height:21px;line-height:22px">0</div>
<div class="ct" style="left:872px;top:554px;width:43px;height:21px;line-height:22px">0</div>
<div class="ct" style="left:915px;top:554px;width:42px;height:21px;line-height:22px">0</div>
<div class="ct" style="left:957px;top:554px;width:42px;height:21px;line-height:22px">0</div>
<div class="ct" style="left:999px;top:554px;width:42px;height:21px;line-height:22px">0</div>
<div class="ct" style="left:1041px;top:554px;width:42px;height:21px;line-height:22px">0</div>
<div class="ct" style="left:1083px;top:554px;width:42px;height:21px;line-height:22px">0</div>
<div class="ct" style="left:1125px;top:554px;width:43px;height:21px;line-height:22px">0</div>
<div class="ct" style="left:36px;top:575px;width:41px;height:20px;line-height:21px">0,065</div>
<div class="ct" style="left:77px;top:575px;width:40px;height:20px;line-height:21px">0,35</div>
<div class="ct" style="left:117px;top:575px;width:42px;height:20px;line-height:21px">37,8</div>
<div class="ct" style="left:159px;top:575px;width:41px;height:20px;line-height:21px">0,19</div>
<div class="ct" style="left:200px;top:575px;width:43px;height:20px;line-height:21px">8,56</div>
<div class="ct" style="left:243px;top:575px;width:42px;height:20px;line-height:21px">0</div>
<div class="ct" style="left:285px;top:575px;width:43px;height:20px;line-height:21px">0</div>
<div class="ct" style="left:328px;top:575px;width:41px;height:20px;line-height:21px">0</div>
<div class="ct" style="left:369px;top:575px;width:42px;height:20px;line-height:21px">0</div>
<div class="ct" style="left:411px;top:575px;width:42px;height:20px;line-height:21px">0</div>
<div class="ct" style="left:453px;top:575px;width:42px;height:20px;line-height:21px">0</div>
<div class="ct" style="left:495px;top:575px;width:41px;height:20px;line-height:21px">0</div>
<div class="ct" style="left:536px;top:575px;width:43px;height:20px;line-height:21px">0</div>
<div class="ct" style="left:579px;top:575px;width:42px;height:20px;line-height:21px">0</div>
<div class="ct" style="left:621px;top:575px;width:42px;height:20px;line-height:21px">0</div>
<div class="ct" style="left:663px;top:575px;width:42px;height:20px;line-height:21px">0</div>
<div class="ct" style="left:705px;top:575px;width:42px;height:20px;line-height:21px">0</div>
<div class="ct" style="left:747px;top:575px;width:41px;height:20px;line-height:21px">0</div>
<div class="ct" style="left:788px;top:575px;width:43px;height:20px;line-height:21px">0</div>
<div class="ct" style="left:831px;top:575px;width:41px;height:20px;line-height:21px">0</div>
<div class="ct" style="left:872px;top:575px;width:43px;height:20px;line-height:21px">0</div>
<div class="ct" style="left:915px;top:575px;width:42px;height:20px;line-height:21px">0</div>
<div class="ct" style="left:957px;top:575px;width:42px;height:20px;line-height:21px">0</div>
<div class="ct" style="left:999px;top:575px;width:42px;height:20px;line-height:21px">0</div>
<div class="ct" style="left:1041px;top:575px;width:42px;height:20px;line-height:21px">0</div>
<div class="ct" style="left:1083px;top:575px;width:42px;height:20px;line-height:21px">0</div>
<div class="ct" style="left:1125px;top:575px;width:43px;height:20px;line-height:21px">0</div>
<div class="ct" style="left:36px;top:595px;width:41px;height:21px;line-height:22px">0,07</div>
<div class="ct" style="left:77px;top:595px;width:40px;height:21px;line-height:22px">0,38</div>
<div class="ct" style="left:117px;top:595px;width:42px;height:21px;line-height:22px">43,2</div>
<div class="ct" style="left:159px;top:595px;width:41px;height:21px;line-height:22px">0,21</div>
<div class="ct" style="left:200px;top:595px;width:43px;height:21px;line-height:22px">9,75</div>
<div class="ct" style="left:243px;top:595px;width:42px;height:21px;line-height:22px">0</div>
<div class="ct" style="left:285px;top:595px;width:43px;height:21px;line-height:22px">0</div>
<div class="ct" style="left:328px;top:595px;width:41px;height:21px;line-height:22px">0</div>
<div class="ct" style="left:369px;top:595px;width:42px;height:21px;line-height:22px">0</div>
<div class="ct" style="left:411px;top:595px;width:42px;height:21px;line-height:22px">0</div>
<div class="ct" style="left:453px;top:595px;width:42px;height:21px;line-height:22px">0</div>
<div class="ct" style="left:495px;top:595px;width:41px;height:21px;line-height:22px">0</div>
<div class="ct" style="left:536px;top:595px;width:43px;height:21px;line-height:22px">0</div>
<div class="ct" style="left:579px;top:595px;width:42px;height:21px;line-height:22px">0</div>
<div class="ct" style="left:621px;top:595px;width:42px;height:21px;line-height:22px">0</div>
<div class="ct" style="left:663px;top:595px;width:42px;height:21px;line-height:22px">0</div>
<div class="ct" style="left:705px;top:595px;width:42px;height:21px;line-height:22px">0</div>
<div class="ct" style="left:747px;top:595px;width:41px;height:21px;line-height:22px">0</div>
<div class="ct" style="left:788px;top:595px;width:43px;height:21px;line-height:22px">0</div>
<div class="ct" style="left:831px;top:595px;width:41px;height:21px;line-height:22px">0</div>
<div class="ct" style="left:872px;top:595px;width:43px;height:21px;line-height:22px">0</div>
<div class="ct" style="left:915px;top:595px;width:42px;height:21px;line-height:22px">0</div>
<div class="ct" style="left:957px;top:595px;width:42px;height:21px;line-height:22px">0</div>
<div class="ct" style="left:999px;top:595px;width:42px;height:21px;line-height:22px">0</div>
<div class="ct" style="left:1041px;top:595px;width:42px;height:21px;line-height:22px">0</div>
<div class="ct" style="left:1083px;top:595px;width:42px;height:21px;line-height:22px">0</div>
<div class="ct" style="left:1125px;top:595px;width:43px;height:21px;line-height:22px">0</div>
<div class="ct" style="left:36px;top:616px;width:41px;height:21px;line-height:22px">0,075</div>
<div class="ct" style="left:77px;top:616px;width:40px;height:21px;line-height:22px">0,41</div>
<div class="ct" style="left:117px;top:616px;width:42px;height:21px;line-height:22px">48,9</div>
<div class="ct" style="left:159px;top:616px;width:41px;height:21px;line-height:22px">0,22</div>
<div class="ct" style="left:200px;top:616px;width:43px;height:21px;line-height:22px">11</div>
<div class="ct" style="left:243px;top:616px;width:42px;height:21px;line-height:22px">0</div>
<div class="ct" style="left:285px;top:616px;width:43px;height:21px;line-height:22px">0</div>
<div class="ct" style="left:328px;top:616px;width:41px;height:21px;line-height:22px">0</div>
<div class="ct" style="left:369px;top:616px;width:42px;height:21px;line-height:22px">0</div>
<div class="ct" style="left:411px;top:616px;width:42px;height:21px;line-height:22px">0</div>
<div class="ct" style="left:453px;top:616px;width:42px;height:21px;line-height:22px">0</div>
<div class="ct" style="left:495px;top:616px;width:41px;height:21px;line-height:22px">0</div>
<div class="ct" style="left:536px;top:616px;width:43px;height:21px;line-height:22px">0</div>
<div class="ct" style="left:579px;top:616px;width:42px;height:21px;line-height:22px">0</div>
<div class="ct" style="left:621px;top:616px;width:42px;height:21px;line-height:22px">0</div>
<div class="ct" style="left:663px;top:616px;width:42px;height:21px;line-height:22px">0</div>
<div class="ct" style="left:705px;top:616px;width:42px;height:21px;line-height:22px">0</div>
<div class="ct" style="left:747px;top:616px;width:41px;height:21px;line-height:22px">0</div>
<div class="ct" style="left:788px;top:616px;width:43px;height:21px;line-height:22px">0</div>
<div class="ct" style="left:831px;top:616px;width:41px;height:21px;line-height:22px">0</div>
<div class="ct" style="left:872px;top:616px;width:43px;height:21px;line-height:22px">0</div>
<div class="ct" style="left:915px;top:616px;width:42px;height:21px;line-height:22px">0</div>
<div class="ct" style="left:957px;top:616px;width:42px;height:21px;line-height:22px">0</div>
<div class="ct" style="left:999px;top:616px;width:42px;height:21px;line-height:22px">0</div>
<div class="ct" style="left:1041px;top:616px;width:42px;height:21px;line-height:22px">0</div>
<div class="ct" style="left:1083px;top:616px;width:42px;height:21px;line-height:22px">0</div>
<div class="ct" style="left:1125px;top:616px;width:43px;height:21px;line-height:22px">0</div>
<div class="ab" style="left:1168px;top:389px;width:17px;height:249px;background:#efefef"></div>
<div class="ab" style="left:1176px;top:405px;width:2px;height:16px;background:#8a8a8a"></div>
<!-- status -->
<div class="ab" style="left:1px;top:651px;width:1196px;height:20px;background:#efefef"></div>
<div class="ab" style="left:14px;top:655px;font-size:11px;white-space:nowrap;color:#000">13.090Гб доступно из 31.115Гб, я потребляю 222.0Мб</div>
<svg class="ab" style="left:1184px;top:657px" width="12" height="13" viewBox="0 0 12 13" fill="#a0a0a0">
<rect x="8" y="1" width="2" height="2"/><rect x="8" y="5" width="2" height="2"/><rect x="4" y="5" width="2" height="2"/>
<rect x="8" y="9" width="2" height="2"/><rect x="4" y="9" width="2" height="2"/><rect x="0" y="9" width="2" height="2"/></svg>
<!-- borders -->
<div class="ab" style="left:0;top:0;width:1198px;height:672px;border:1px solid #3a3a3a;border-bottom-color:#8a8a8a;border-radius:8px;pointer-events:none"></div>
</div>
</body></html>
